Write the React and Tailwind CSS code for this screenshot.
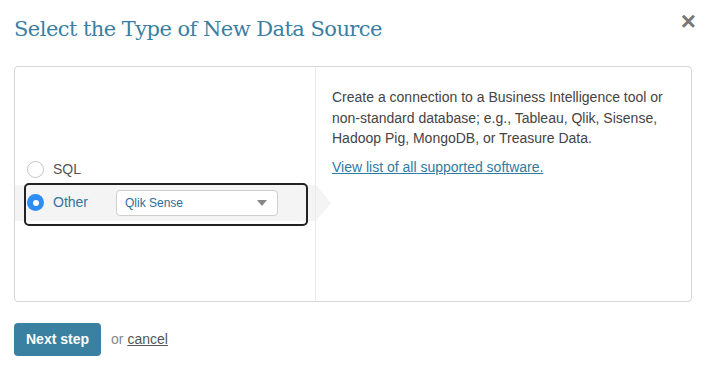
function Radio({ checked }) {
  if (checked) {
    return (
      <span className="flex h-[17px] w-[17px] items-center justify-center rounded-full bg-[#2d8df2]">
        <span className="h-[6px] w-[6px] rounded-full bg-white" />
      </span>
    );
  }
  return <span className="block h-[17px] w-[17px] rounded-full border border-[#c4c4c4] bg-white" />;
}

export default function App() {
  return (
    <div className="relative h-[375px] w-[712px] bg-white px-[14px] pt-[14px] font-['Liberation_Sans',Arial,sans-serif]">
      <h1 className="font-['DejaVu_Serif',serif] text-[21px] leading-[30px] tracking-[-0.55px] text-[#3a7fa3]">
        Select the Type of New Data Source
      </h1>
      <button className="absolute right-[16px] top-[8px] text-[26px] font-bold leading-none text-[#777]">×</button>

      <div className="mt-[22px] flex h-[236px] w-[678px] rounded-[4px] border border-[#d6d6d6]">
        <div className="relative flex w-[301px] flex-col justify-center border-r border-[#ececec] pt-[12px]">
          <div className="flex h-[20px] items-center gap-[9px] pl-[12px]">
            <Radio checked={false} />
            <span className="text-[14px] text-[#555]">SQL</span>
          </div>
          <div className="relative mt-[5px] flex h-[36px] items-center bg-[#f4f4f4]">
            <div className="absolute -right-[16px] top-0 h-0 w-0 border-y-[18px] border-l-[15px] border-y-transparent border-l-[#f4f4f4]" />
            <div className="absolute left-[9px] top-[-2px] h-[43px] w-[284px] rounded-[5px] border-2 border-[#222]" />
            <div className="flex items-center gap-[9px] pl-[12px]">
              <Radio checked />
              <span className="w-[55px] text-[14px] text-[#2f77a0]">Other</span>
            </div>
            <div className="ml-[8px] flex h-[26px] w-[162px] items-center justify-between rounded-[4px] border border-[#cfcfcf] bg-white pl-[8px] pr-[10px]">
              <span className="text-[12px] text-[#2f6d96]">Qlik Sense</span>
              <svg width="10" height="6" viewBox="0 0 10 6"><path d="M0 0h10L5 6z" fill="#888" /></svg>
            </div>
          </div>
        </div>
        <div className="flex-1 px-[16px] pt-[20px]">
          <p className="text-[14px] leading-[20.5px] text-[#444]">
            Create a connection to a Business Intelligence tool or non-standard database; e.g., Tableau, Qlik, Sisense, Hadoop Pig, MongoDB, or Treasure Data.
          </p>
          <a className="mt-[8px] block text-[14px] leading-[21px] text-[#2f7aa3] underline">View list of all supported software.</a>
        </div>
      </div>

      <div className="mt-[21px] flex items-center gap-[10px]">
        <button className="h-[33px] rounded-[4px] bg-[#3a80a1] px-[12px] text-[14px] font-bold text-white">Next step</button>
        <span className="text-[14px] text-[#888]">
          or <a className="text-[#555] underline">cancel</a>
        </span>
      </div>
    </div>
  );
}
